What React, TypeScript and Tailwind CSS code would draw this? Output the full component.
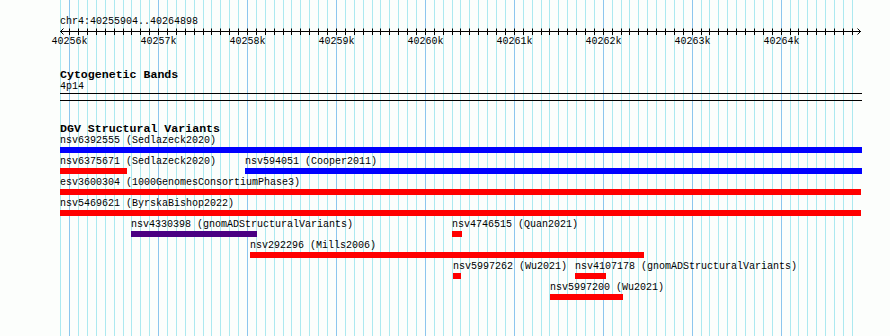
import React from 'react';

const VIEW_START = 40255904;
const VIEW_END = 40264898;
const PX_PER_BP = 800 / (VIEW_END - VIEW_START + 1);

const bpToX = (bp: number) => 60.6 + (bp - VIEW_START) * PX_PER_BP;

interface Feature {
  label: string;
  start: number;
  end: number;
  color: 'red' | 'blue' | 'indigo';
}

const barColor = {
  red: 'bg-[#ff0000]',
  blue: 'bg-[#0000ff]',
  indigo: 'bg-[#4b0082]',
};

const rows: Feature[][] = [
  [{ label: 'nsv6392555 (Sedlazeck2020)', start: 60, end: 862, color: 'blue' }],
  [
    { label: 'nsv6375671 (Sedlazeck2020)', start: 60, end: 127, color: 'red' },
    { label: 'nsv594051 (Cooper2011)', start: 245, end: 862, color: 'blue' },
  ],
  [{ label: 'esv3600304 (1000GenomesConsortiumPhase3)', start: 60, end: 861, color: 'red' }],
  [{ label: 'nsv5469621 (ByrskaBishop2022)', start: 60, end: 861, color: 'red' }],
  [
    { label: 'nsv4330398 (gnomADStructuralVariants)', start: 131, end: 257, color: 'indigo' },
    { label: 'nsv4746515 (Quan2021)', start: 452, end: 462, color: 'red' },
  ],
  [{ label: 'nsv292296 (Mills2006)', start: 250, end: 644, color: 'red' }],
  [
    { label: 'nsv5997262 (Wu2021)', start: 453, end: 461, color: 'red' },
    { label: 'nsv4107178 (gnomADStructuralVariants)', start: 575, end: 606, color: 'red' },
  ],
  [{ label: 'nsv5997200 (Wu2021)', start: 550, end: 623, color: 'red' }],
];

// every 100bp from the first gridline inside the view
const ticks: number[] = [];
for (let bp = 40255900; bp <= 40264800; bp += 100) ticks.push(bp);

const GridLines: React.FC = () => (
  <svg className="absolute inset-0 pointer-events-none" width={890} height={336}>
    {ticks.map((bp) => {
      const x = Math.round(bpToX(bp)) + 0.5;
      const major = bp % 1000 === 0;
      return (
        <line
          key={bp}
          x1={x}
          x2={x}
          y1={0}
          y2={336}
          stroke={major ? '#8cc6ee' : '#ace9f0'}
          strokeWidth={1}
        />
      );
    })}
  </svg>
);

const Ruler: React.FC = () => (
  <svg width={890} height={18} className="block">
    <line x1={60} x2={861} y1={3.5} y2={3.5} stroke="#000" strokeWidth={1} />
    <polyline points="63.5,0.5 60.5,3.5 63.5,6.5" fill="none" stroke="#000" strokeWidth={1} />
    <polyline points="857.5,0.5 860.5,3.5 857.5,6.5" fill="none" stroke="#000" strokeWidth={1} />
    {ticks.slice(1).map((bp) => {
      const x = Math.round(bpToX(bp)) + 0.5;
      return <line key={bp} x1={x} x2={x} y1={0.5} y2={7} stroke="#000" strokeWidth={1} />;
    })}
    {ticks
      .filter((bp) => bp % 1000 === 0)
      .map((bp) => (
        <text
          key={bp}
          x={Math.round(bpToX(bp)) + 0.5}
          y={15.5}
          textAnchor="middle"
          fontSize={10}
          fontFamily="'Liberation Mono', monospace"
          fill="#000"
        >
          {bp / 1000}k
        </text>
      ))}
  </svg>
);

const FeatureRow: React.FC<{ features: Feature[] }> = ({ features }) => (
  <div className="relative h-[21px]">
    {features.map((f) => (
      <div key={f.label} className="absolute top-0" style={{ left: f.start }}>
        <div className="text-[10px] leading-[12px] whitespace-nowrap text-black">{f.label}</div>
        <div className={`h-[6px] ${barColor[f.color]}`} style={{ width: f.end - f.start }} />
      </div>
    ))}
  </div>
);

export default function App() {
  return (
    <div className="relative w-[890px] h-[336px] overflow-hidden bg-[#fcfefc] font-['Liberation_Mono',monospace] text-black">
      <GridLines />
      <div className="relative">
        <div className="pt-[16px] pl-[60px] text-[10px] leading-[12px]">chr4:40255904..40264898</div>
        <Ruler />

        <div className="mt-[22px] pl-[60px] text-[11.6px] leading-[13px] font-bold">Cytogenetic Bands</div>
        <div className="pl-[60px] text-[10px] leading-[12px]">4p14</div>
        <div className="ml-[60px] w-[802px] h-[8px] border-t border-b border-black" />

        <div className="mt-[21px] pl-[60px] text-[11.6px] leading-[13px] font-bold">DGV Structural Variants</div>
        <div>
          {rows.map((r, i) => (
            <FeatureRow key={i} features={r} />
          ))}
        </div>
      </div>
    </div>
  );
}
